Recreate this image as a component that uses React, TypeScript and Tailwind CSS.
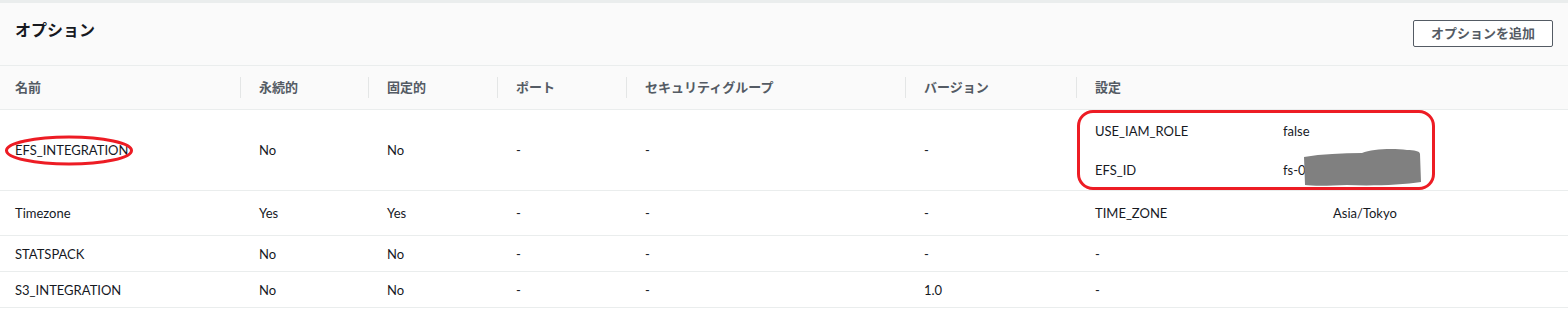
const font = { fontFamily: 'Lato, "Noto Sans CJK JP", sans-serif' };

const grid = 'grid grid-cols-[241px_128px_129px_129px_279px_171px_1fr]';

const headers = ['名前', '永続的', '固定的', 'ポート', 'セキュリティグループ', 'バージョン', '設定'];

function Cell({ children, first }: { children?: React.ReactNode; first?: boolean }) {
  return (
    <div className={`flex items-center pt-[2px] text-[13px] text-[#16191f] ${first ? 'pl-[15px]' : 'pl-[18px]'}`}>
      {children}
    </div>
  );
}

export default function App() {
  return (
    <div style={font} className="w-[1568px] h-[309px] bg-white overflow-hidden">
      <div className="h-[3px] bg-[#eaeded]" />
      <div className="h-[63px] bg-[#fafafa] border-b border-[#eaeded] flex items-start justify-between pl-[15px] pr-[15px]">
        <h2 className="mt-[15px] text-[16px] font-bold text-[#16191f] leading-[24px]">オプション</h2>
        <button className="mt-[17px] w-[140px] h-[27px] border border-[#545b64] rounded-[2px] bg-white text-[13px] font-bold text-[#545b64] leading-none">
          オプションを追加
        </button>
      </div>
      <div className={`${grid} h-[44px] bg-[#fafafa] border-b border-[#eaeded]`}>
        {headers.map((h, i) => (
          <div key={h} className="flex items-center">
            <span className={`flex-1 text-[13px] font-bold text-[#545b64] ${i === 0 ? 'pl-[15px]' : 'pl-[18px]'}`}>{h}</span>
            {i < 6 && <span className="w-px h-[21px] bg-[#e4e6e6]" />}
          </div>
        ))}
      </div>

      <div className={`${grid} h-[81px] border-b border-[#eaeded]`}>
        <Cell first>
          <span className="relative">
            EFS_INTEGRATION
            <svg className="absolute left-[-11px] top-[-6px]" width="130" height="31" viewBox="0 0 130 31">
              <ellipse cx="65" cy="15.5" rx="62.5" ry="13.5" fill="none" stroke="#ed1c24" strokeWidth="3" />
            </svg>
          </span>
        </Cell>
        <Cell>No</Cell>
        <Cell>No</Cell>
        <Cell>-</Cell>
        <Cell>-</Cell>
        <Cell>-</Cell>
        <div className="relative flex flex-col justify-center gap-[19px] pt-[2px] pl-[18px] text-[13px] text-[#16191f]">
          <div className="flex">
            <span className="w-[188px]">USE_IAM_ROLE</span>
            <span>false</span>
          </div>
          <div className="flex">
            <span className="w-[188px]">EFS_ID</span>
            <span className="relative">
              fs-0
              <svg className="absolute left-[19px] top-[-13px]" width="120" height="40" viewBox="0 0 120 40">
                <path
                  d="M2 9 C20 6 40 5 60 5 C70 1 90 0 105 2 C112 2 118 3 118 6 L119 34 C100 37 70 38 45 37 C25 38 10 38 3 37 Z"
                  fill="#808080"
                />
              </svg>
            </span>
          </div>
          <div className="absolute left-0 top-0 w-[358px] h-[80px] border-[3px] border-[#ed1c24] rounded-[16px]" />
        </div>
      </div>

      <div className={`${grid} h-[45px] border-b border-[#eaeded]`}>
        <Cell first>Timezone</Cell>
        <Cell>Yes</Cell>
        <Cell>Yes</Cell>
        <Cell>-</Cell>
        <Cell>-</Cell>
        <Cell>-</Cell>
        <Cell>
          <span className="w-[238px]">TIME_ZONE</span>
          <span>Asia/Tokyo</span>
        </Cell>
      </div>

      <div className={`${grid} h-[36px] border-b border-[#eaeded]`}>
        <Cell first>STATSPACK</Cell>
        <Cell>No</Cell>
        <Cell>No</Cell>
        <Cell>-</Cell>
        <Cell>-</Cell>
        <Cell>-</Cell>
        <Cell>-</Cell>
      </div>

      <div className={`${grid} h-[36px] border-b border-[#eaeded]`}>
        <Cell first>S3_INTEGRATION</Cell>
        <Cell>No</Cell>
        <Cell>No</Cell>
        <Cell>-</Cell>
        <Cell>-</Cell>
        <Cell>1.0</Cell>
        <Cell>-</Cell>
      </div>
    </div>
  );
}
